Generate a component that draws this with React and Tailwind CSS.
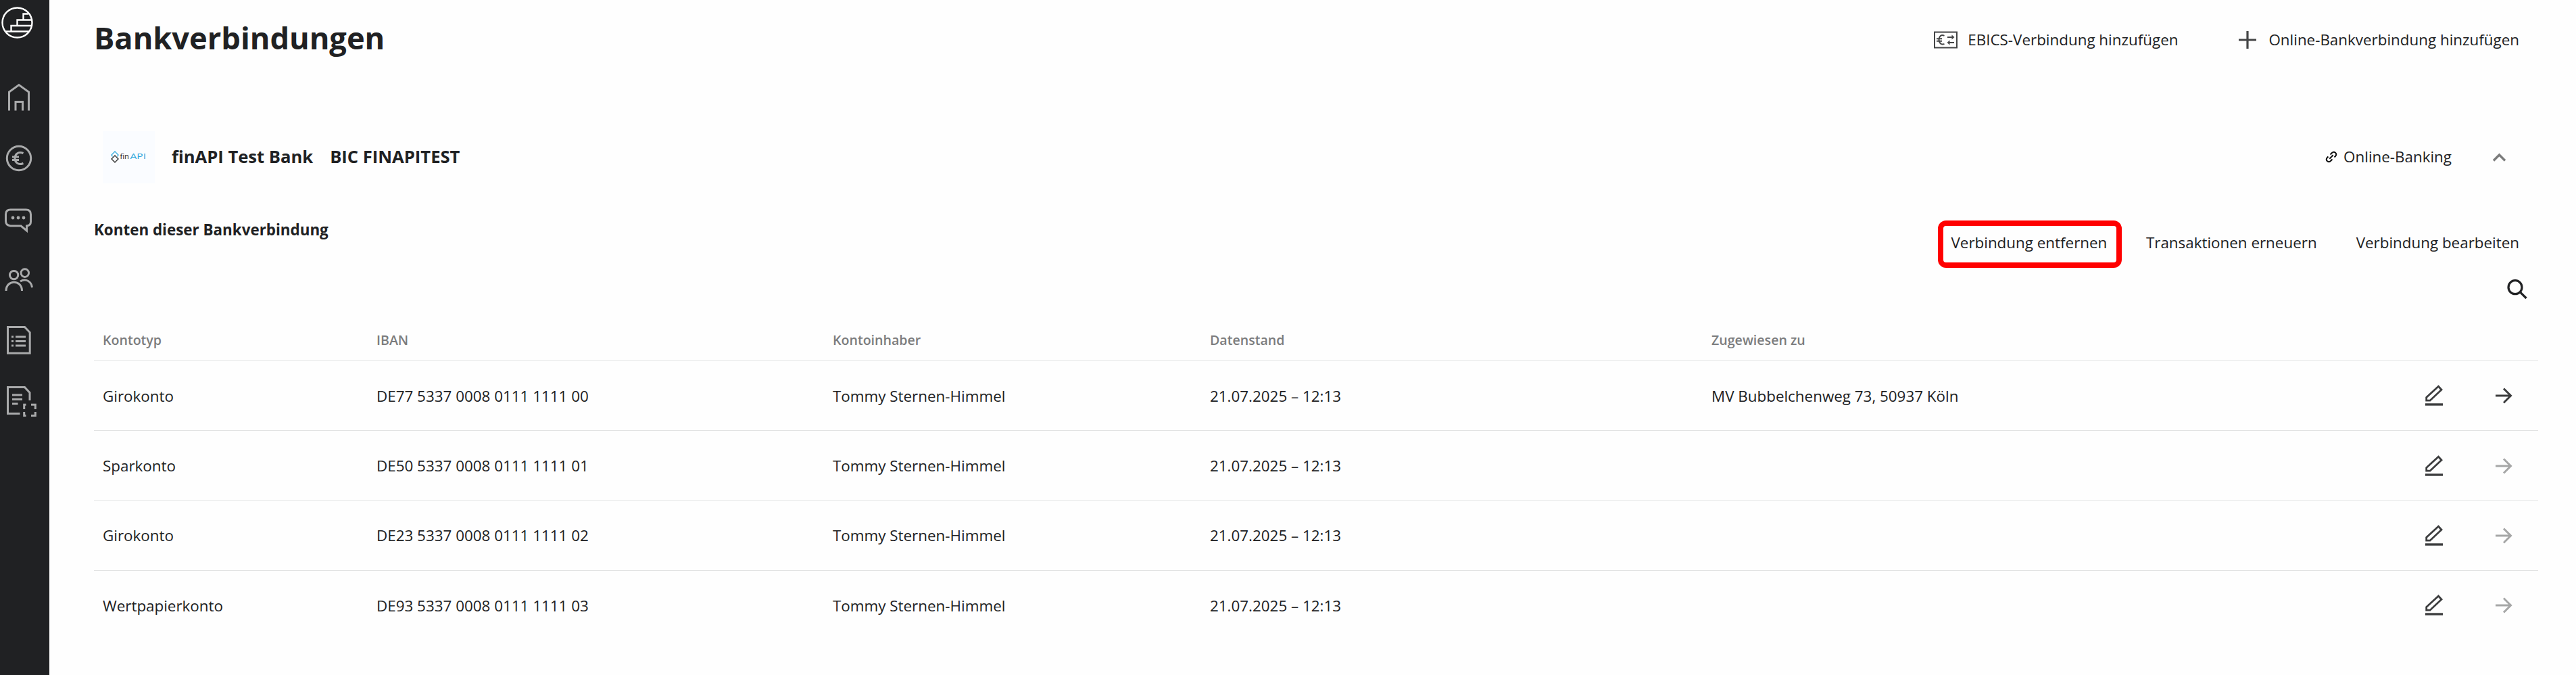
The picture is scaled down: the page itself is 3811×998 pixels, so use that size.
import React from 'react'

const navIcons = [
  {
    name: 'home',
    path: <path d="M13.5 163.5V136L28 125.5L42.5 136V163.5M23 163.5V150.5H33.5V163.5" />
  },
  {
    name: 'euro',
    path: (
      <>
        <circle cx="28" cy="234" r="17.7" />
        <path d="M34.5 226.5C26 223 22 229 22 234S26 245 34.5 241.5M18 232H28M18 236.5H28" />
      </>
    )
  },
  {
    name: 'messages',
    path: (
      <>
        <path d="M15.5 310H38.5Q45.5 310 45.5 317V328Q45.5 333.5 39.5 334V341L31 334H15.5Q8.5 333 8.5 327V317Q8.5 310 15.5 310Z" />
        <path strokeWidth="4.8" strokeLinecap="round" d="M19 322H19.01M27 322H27.01M35 322H35.01" />
      </>
    )
  },
  {
    name: 'contacts',
    path: (
      <>
        <circle cx="20.6" cy="406.6" r="6.2" />
        <circle cx="36.8" cy="403.6" r="5.8" />
        <path d="M9 430C9 413 32.5 413 32.5 430M30 416C38 411 46.5 416 47.5 425" />
      </>
    )
  },
  {
    name: 'lists',
    path: <path d="M11.5 483.5H36.5L44.2 491.5V522.3H11.5ZM17 498H20M23 498H38M17 504.5H20M23 504.5H38M17 511H20M23 511H38" />
  },
  {
    name: 'scan',
    path: (
      <path d="M29.5 611.5H11.5V572.5H36.5L44 580.5V592M18 584H33M18 590.5H33M18 597H26.5M35.7 605V598.2H38.5M46 598.2H52.3V605M52.3 609V614.5H46M38.5 614.5H35.7V609" />
    )
  }
]

const columns = ['Kontotyp', 'IBAN', 'Kontoinhaber', 'Datenstand', 'Zugewiesen zu']

const accounts = [
  { type: 'Girokonto', iban: 'DE77 5337 0008 0111 1111 00', assigned: 'MV Bubbelchenweg 73, 50937 Köln' },
  { type: 'Sparkonto', iban: 'DE50 5337 0008 0111 1111 01' },
  { type: 'Girokonto', iban: 'DE23 5337 0008 0111 1111 02' },
  { type: 'Wertpapierkonto', iban: 'DE93 5337 0008 0111 1111 03' }
]

function Sidebar() {
  return (
    <aside className="w-[73px] h-full shrink-0 bg-[#202123]">
      <svg width="73" height="640" fill="none" stroke="#a9aaab" strokeWidth="3">
        <g stroke="#fff" strokeWidth="2.4">
          <circle cx="25.5" cy="33.5" r="22" />
          <path d="M8 46.5H43M16.5 46V38H47M25.5 38V29.5H47M34.5 29V20.5H42" />
        </g>
        {navIcons.map((icon) => (
          <g key={icon.name}>{icon.path}</g>
        ))}
      </svg>
    </aside>
  )
}

function EbicsIcon() {
  return (
    <svg width="35" height="26" viewBox="0 0 35 26" fill="none" stroke="#444546" strokeWidth="2">
      <path d="M1 1.5H34V24.5H1Z" />
      <path d="M15.5 6.8C10.5 4.5 7.5 8.5 7.5 12.8S10.5 21 15.5 18.8M4 11.3H12M4 14.7H12" />
      <path d="M20 9H28.5M30 17H21.5" />
      <path d="M26.5 5.5L30.5 9L26.5 12.5ZM23.5 13.5L19.5 17L23.5 20.5Z" fill="#444546" stroke="none" />
    </svg>
  )
}

function FinApiLogo() {
  return (
    <div className="w-[77px] h-[77px] bg-[#fafcff] font-normal">
      <svg width="77" height="77" fill="none" strokeWidth="1.4">
        <path d="M14.5 37.5L13 35L18 30L23 35L21.5 37.5" stroke="#3aaede" />
        <path d="M18 36L23 41L18 46L13 41Z" stroke="#333" />
        <g fontFamily="Open Sans, sans-serif" fontSize="10" stroke="none">
          <text x="25.5" y="41" textLength="13.5" lengthAdjust="spacingAndGlyphs" fill="#222">fin</text>
          <text x="40.5" y="41" textLength="23.5" lengthAdjust="spacingAndGlyphs" fill="#2ba6dc">API</text>
        </g>
      </svg>
    </div>
  )
}

function EditIcon() {
  return (
    <svg width="26" height="32" viewBox="0 0 26 32" fill="none" stroke="#3c3d3e" strokeWidth="2.8">
      <path d="M1.7 18.5L19.5 2.3L24 7.2L7 23.2H1.7Z" />
      <path strokeWidth="3.4" d="M0 29H26" />
    </svg>
  )
}

function ArrowIcon({ active }) {
  return (
    <svg width="25" height="24" viewBox="0 0 25 24" fill="none" strokeWidth="3" stroke={active ? '#3c3d3e' : '#a6a7a7'}>
      <path d="M0 12H22M12 1.5L22.5 12L12 22.5" />
    </svg>
  )
}

export default function App() {
  return (
    <div className="flex w-[3811px] h-[998px] bg-[#fefefe] text-[#202123] text-[22.4px] leading-[30px] font-['Open_Sans',sans-serif] overflow-hidden">
      <Sidebar />
      <main className="flex-1 pl-[66px] pr-[56px]">
        <header className="flex items-center justify-between h-[116px] pr-[28px]">
          <h1 className="text-[45.2px] leading-[60px] font-bold pb-[4px]">Bankverbindungen</h1>
          <div className="flex items-center pt-[2px]">
            <button className="flex items-center gap-[15px] mr-[90px]">
              <EbicsIcon />
              EBICS-Verbindung hinzufügen
            </button>
            <button className="flex items-center gap-[18px]">
              <svg width="26" height="26" stroke="#444546" strokeWidth="3.2">
                <path d="M0 13H26M13 0V26" />
              </svg>
              Online-Bankverbindung hinzufügen
            </button>
          </div>
        </header>

        {/* Bank */}
        <section className="flex items-center justify-between mt-5 h-[190px] pl-[13px] pr-[48px]">
          <div className="flex items-center pt-[2px] text-[25.6px] font-bold">
            <FinApiLogo />
            <h2 className="ml-[25px]">finAPI Test Bank</h2>
            <h2 className="ml-[25px]">BIC FINAPITEST</h2>
          </div>
          <div className="flex items-center pt-[2px]">
            <svg width="18" height="18" viewBox="0 0 18 18" fill="none" stroke="#111" strokeWidth="2">
              <path d="M7.5 5.5L10 3Q12.5 0.5 15 2.8T15 8L13.5 9.5M10.5 12.5L8 15Q5.5 17.5 3 15.2T3 10L4.5 8.5M6.3 11.7L11.7 6.3" />
            </svg>
            <span className="ml-[9px]">Online-Banking</span>
            <svg className="ml-[61px]" width="19" height="13" fill="none" stroke="#7b7c7c" strokeWidth="3.4">
              <path d="M1 11.5L9.5 3L18 11.5" />
            </svg>
          </div>
        </section>

        <div className="flex items-start justify-between h-[70px] pr-[28px]">
          <h3 className="font-bold leading-[28px]">Konten dieser Bankverbindung</h3>
          <div className="flex items-center h-[70px]">
            <button className="w-[272px] h-[70px] mr-[36px] pb-[5px] pr-[2px] border-8 border-[#ff0000] rounded-[12px] whitespace-nowrap">
              Verbindung entfernen
            </button>
            <button className="mr-[58px] pb-[5px]">Transaktionen erneuern</button>
            <button className="pb-[5px]">Verbindung bearbeiten</button>
          </div>
        </div>

        <div className="flex justify-end mt-[17px] pr-[16px]">
          <svg width="30" height="29" fill="none" stroke="#202123" strokeWidth="3.2">
            <circle cx="12" cy="11.7" r="10" />
            <path d="M19 18.7L28.5 28" />
          </svg>
        </div>

        {/* Accounts */}
        <div className="mt-[30px]">
          <div className="grid grid-cols-[405px_675px_558px_742px_1fr] items-center h-[62px] pl-[13px] border-b border-[#e2e3e3] text-[19.6px] font-semibold text-[#7b7c7d]">
            {columns.map((column) => (
              <span key={column}>{column}</span>
            ))}
          </div>
          {accounts.map((account) => (
            <div
              key={account.iban}
              className="grid grid-cols-[405px_675px_558px_742px_1fr] items-center h-[103.4px] pl-[13px] pt-px border-b border-[#e2e3e3] last:border-transparent"
            >
              <span>{account.type}</span>
              <span>{account.iban}</span>
              <span>Tommy Sternen-Himmel</span>
              <span>21.07.2025 – 12:13</span>
              <div className="flex items-center">
                <span>{account.assigned}</span>
                <div className="flex items-center gap-[78px] ml-auto pr-[38px] pb-px">
                  <EditIcon />
                  <ArrowIcon active={Boolean(account.assigned)} />
                </div>
              </div>
            </div>
          ))}
        </div>
      </main>
    </div>
  )
}
